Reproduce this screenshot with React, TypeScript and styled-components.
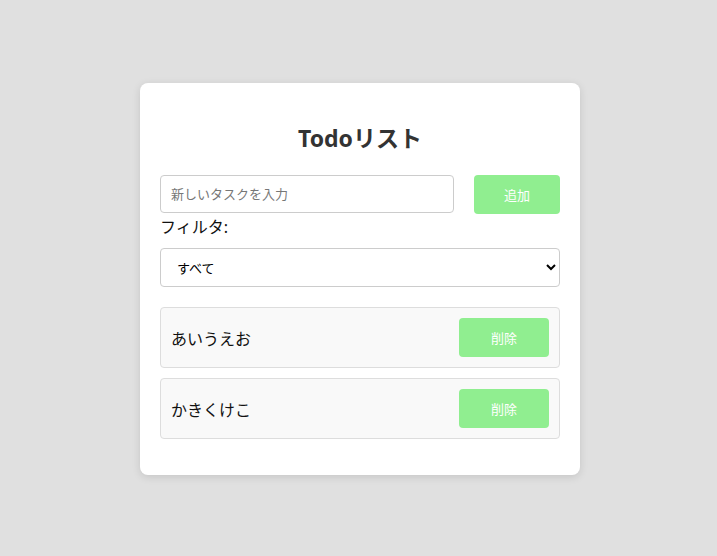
import { useState } from "react";
import styled, { createGlobalStyle } from "styled-components";

const GlobalStyle = createGlobalStyle`
  html, body {
    margin: 0;
    padding: 0;
    background: #e0e0e0;
    font-family: "Noto Sans", "Noto Sans CJK JP", sans-serif;
  }
`;

const Page = styled.div`
  display: flex;
  justify-content: center;
  align-items: flex-start;
  padding: 83px 0 0 3px;
  min-height: 556px;
  box-sizing: border-box;
`;

const Card = styled.div`
  width: 440px;
  box-sizing: border-box;
  background: #fff;
  border-radius: 8px;
  box-shadow: 0 2px 8px rgba(0, 0, 0, 0.12);
  padding: 20px 20px 36px;
`;

const Title = styled.h2`
  margin: 16px 0 0;
  height: 38px;
  line-height: 38px;
  text-align: center;
  font-family: "Noto Sans", "Noto Sans CJK JP", sans-serif;
  font-size: 23px;
  font-weight: 700;
  color: #333;
`;

const InputRow = styled.div`
  display: flex;
  gap: 20px;
  margin-top: 18px;
`;

const TaskInput = styled.input`
  flex: 1;
  height: 38px;
  box-sizing: border-box;
  padding: 0 10px;
  border: 1px solid #ccc;
  border-radius: 4px;
  font-family: inherit;
  font-size: 13px;
  &::placeholder {
    color: #777;
  }
`;

const Button = styled.button<{ $width: number }>`
  width: ${(p) => p.$width}px;
  height: 39px;
  border: none;
  border-radius: 4px;
  background: #90ee90;
  color: #fff;
  font-family: inherit;
  font-size: 13px;
  cursor: pointer;
`;

const Label = styled.label`
  display: block;
  height: 26px;
  line-height: 26px;
  margin-bottom: 8px;
  font-size: 16px;
  color: #111;
`;

const Select = styled.select`
  width: 100%;
  height: 39px;
  box-sizing: border-box;
  padding: 0 12px;
  border: 1px solid #ccc;
  border-radius: 4px;
  background: #fff;
  font-family: inherit;
  font-size: 13px;
  color: #000;
`;

const List = styled.ul`
  list-style: none;
  margin: 20px 0 0;
  padding: 0;
  display: flex;
  flex-direction: column;
  gap: 10px;
`;

const Item = styled.li`
  display: flex;
  align-items: center;
  justify-content: space-between;
  height: 61px;
  box-sizing: border-box;
  padding: 0 10px;
  background: #f9f9f9;
  border: 1px solid #ddd;
  border-radius: 4px;
  font-size: 16px;
  color: #111;
`;

export default function App() {
  const [todos] = useState(["あいうえお", "かきくけこ"]);

  return (
    <>
      <GlobalStyle />
      <Page>
        <Card>
          <Title>Todoリスト</Title>
          <InputRow>
            <TaskInput placeholder="新しいタスクを入力" />
            <Button $width={86}>追加</Button>
          </InputRow>
          <Label>フィルタ:</Label>
          <Select defaultValue="all">
            <option value="all">すべて</option>
            <option value="done">完了</option>
            <option value="todo">未完了</option>
          </Select>
          <List>
            {todos.map((t) => (
              <Item key={t}>
                <span>{t}</span>
                <Button $width={90}>削除</Button>
              </Item>
            ))}
          </List>
        </Card>
      </Page>
    </>
  );
}
